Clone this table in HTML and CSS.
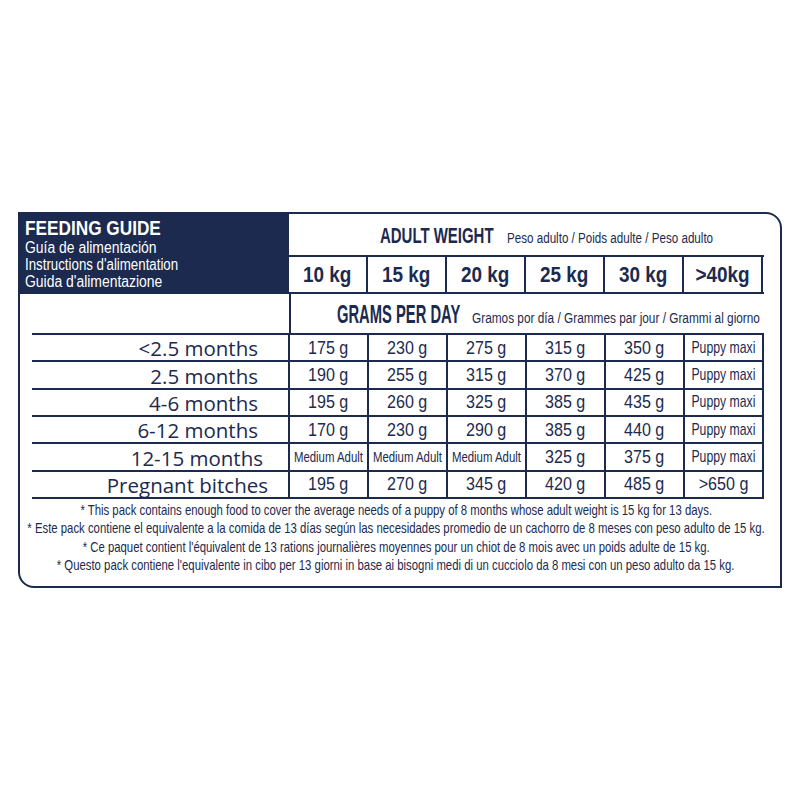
FILE: index.html
```html
<!DOCTYPE html>
<html>
<head>
<meta charset="utf-8">
<link rel="stylesheet" href="styles.css">
</head>
<body>
<div class="page">
  <div class="card">
    <div class="head">
      <div class="brand">
        <div class="brand-title"><span class="sx">FEEDING GUIDE</span></div>
        <div class="brand-sub"><span class="sx">Guía de alimentación</span></div>
        <div class="brand-sub narrow"><span class="sx">Instructions d'alimentation</span></div>
        <div class="brand-sub"><span class="sx">Guida d'alimentazione</span></div>
      </div>
      <div class="hright">
        <div class="aw">
          <div class="big-box aw-box"><span class="sx big aw-big">ADULT WEIGHT</span></div>
          <span class="sx small aw-small">Peso adulto / Poids adulte / Peso adulto</span>
        </div>
        <div class="kgrow">
          <div class="kg"><span class="sx">10 kg</span></div>
          <div class="kg"><span class="sx">15 kg</span></div>
          <div class="kg"><span class="sx">20 kg</span></div>
          <div class="kg"><span class="sx">25 kg</span></div>
          <div class="kg"><span class="sx">30 kg</span></div>
          <div class="kg"><span class="sx">&gt;40kg</span></div>
        </div>
      </div>
    </div>
    <div class="gramsrow">
      <div class="spacer"></div>
      <div class="grams">
        <div class="big-box gr-box"><span class="sx big gr-big">GRAMS PER DAY</span></div>
        <span class="sx small gr-small">Gramos por día / Grammes par jour / Grammi al giorno</span>
      </div>
    </div>
    <div class="rows">
      <div class="lbl">&lt;2.5 months</div>
      <div class="v"><span class="sx">175 g</span></div><div class="v"><span class="sx">230 g</span></div><div class="v"><span class="sx">275 g</span></div><div class="v"><span class="sx">315 g</span></div><div class="v"><span class="sx">350 g</span></div><div class="v pm"><span class="sx">Puppy maxi</span></div>

      <div class="lbl">2.5 months</div>
      <div class="v"><span class="sx">190 g</span></div><div class="v"><span class="sx">255 g</span></div><div class="v"><span class="sx">315 g</span></div><div class="v"><span class="sx">370 g</span></div><div class="v"><span class="sx">425 g</span></div><div class="v pm"><span class="sx">Puppy maxi</span></div>

      <div class="lbl">4-6 months</div>
      <div class="v"><span class="sx">195 g</span></div><div class="v"><span class="sx">260 g</span></div><div class="v"><span class="sx">325 g</span></div><div class="v"><span class="sx">385 g</span></div><div class="v"><span class="sx">435 g</span></div><div class="v pm"><span class="sx">Puppy maxi</span></div>

      <div class="lbl">6-12 months</div>
      <div class="v"><span class="sx">170 g</span></div><div class="v"><span class="sx">230 g</span></div><div class="v"><span class="sx">290 g</span></div><div class="v"><span class="sx">385 g</span></div><div class="v"><span class="sx">440 g</span></div><div class="v pm"><span class="sx">Puppy maxi</span></div>

      <div class="lbl l-wide">12-15 months</div>
      <div class="v ma"><span class="sx">Medium Adult</span></div><div class="v ma"><span class="sx">Medium Adult</span></div><div class="v ma"><span class="sx">Medium Adult</span></div><div class="v"><span class="sx">325 g</span></div><div class="v"><span class="sx">375 g</span></div><div class="v pm"><span class="sx">Puppy maxi</span></div>

      <div class="lbl l-preg">Pregnant bitches</div>
      <div class="v"><span class="sx">195 g</span></div><div class="v"><span class="sx">270 g</span></div><div class="v"><span class="sx">345 g</span></div><div class="v"><span class="sx">420 g</span></div><div class="v"><span class="sx">485 g</span></div><div class="v"><span class="sx">&gt;650 g</span></div>
    </div>
    <div class="notes">
      <div class="note"><span class="sx">* This pack contains enough food to cover the average needs of a puppy of 8 months whose adult weight is 15 kg for 13 days.</span></div>
      <div class="note"><span class="sx">* Este pack contiene el equivalente a la comida de 13 días según las necesidades promedio de un cachorro de 8 meses con peso adulto de 15 kg.</span></div>
      <div class="note"><span class="sx">* Ce paquet contient l'équivalent de 13 rations journalières moyennes pour un chiot de 8 mois avec un poids adulte de 15 kg.</span></div>
      <div class="note"><span class="sx">* Questo pack contiene l'equivalente in cibo per 13 giorni in base ai bisogni medi di un cucciolo da 8 mesi con un peso adulto da 15 kg.</span></div>
    </div>
  </div>
</div>
</body>
</html>
```
FILE: styles.css
```css
* { box-sizing: border-box; }
html, body { margin: 0; padding: 0; background: #ffffff; }
body {
  font-family: "Liberation Sans", Arial, sans-serif;
  color: #1b2a4e;
}
.sx {
  display: inline-block;
  white-space: nowrap;
  transform: scaleX(var(--s, 0.85));
  transform-origin: center center;
}
.page {
  width: 800px;
  height: 800px;
  padding: 212px 0 0 18px;
  overflow: hidden;
}
.card {
  width: 764px;
  height: 376px;
  border: 2px solid #1b2a4e;
  border-radius: 0 16px 0 16px;
  display: flex;
  flex-direction: column;
}
.head {
  display: flex;
  height: 80px;
}
.brand {
  width: 269px;
  flex-shrink: 0;
  background: #1b2a4e;
  color: #ffffff;
  padding: 3px 0 0 5px;
  overflow: hidden;
}
.brand .sx { transform-origin: left center; }
.brand-title {
  font-weight: bold;
  font-size: 21px;
  line-height: 22px;
  --s: 0.82;
}
.brand-sub {
  font-size: 16px;
  line-height: 17px;
  --s: 0.87;
}
.brand-sub.narrow { --s: 0.83; }
.hright {
  flex: 1;
  display: flex;
  flex-direction: column;
}
.aw {
  height: 41px;
  display: flex;
  align-items: baseline;
  padding: 9px 0 0 91px;
  overflow: hidden;
  white-space: nowrap;
}
.big-box { flex-shrink: 0; }
.aw-box { width: 127px; }
.big { font-weight: bold; transform-origin: left center; }
.small { transform-origin: left center; }
.aw-big { font-size: 22px; --s: 0.68; }
.aw-small { font-size: 14px; --s: 0.83; }
.kgrow {
  display: grid;
  grid-template-columns: repeat(6, 79px);
  width: 475px;
  height: 39px;
  border-top: 2px solid #1b2a4e;
  border-bottom: 2px solid #1b2a4e;
}
.kg {
  border-right: 2px solid #1b2a4e;
  display: flex;
  align-items: center;
  justify-content: center;
  font-weight: bold;
  font-size: 22px;
  --s: 0.86;
}
.gramsrow {
  display: flex;
  height: 39px;
}
.spacer { width: 269px; flex-shrink: 0; }
.grams {
  flex: 1;
  border-left: 2px solid #1b2a4e;
  display: flex;
  align-items: baseline;
  padding: 6px 0 0 46px;
  overflow: hidden;
  white-space: nowrap;
}
.gr-box { width: 135px; }
.gr-big { font-size: 25px; --s: 0.59; }
.gr-small { font-size: 14px; --s: 0.845; }
.rows {
  margin-left: 12px;
  width: 732px;
  display: grid;
  grid-template-columns: 258px repeat(6, 79px);
  grid-auto-rows: 27.33px;
  border-top: 2px solid #1b2a4e;
}
.lbl {
  font-family: "Open Sans", "Noto Sans", sans-serif;
  font-size: 20.5px;
  border-right: 2px solid #1b2a4e;
  border-bottom: 2px solid #1b2a4e;
  display: flex;
  align-items: center;
  justify-content: flex-end;
  padding: 2px 30px 0 0;
  line-height: 1;
  white-space: nowrap;
}
.lbl.l-wide { padding-right: 25px; }
.lbl.l-preg { padding-right: 20px; }
.v {
  border-right: 2px solid #1b2a4e;
  border-bottom: 2px solid #1b2a4e;
  display: flex;
  align-items: center;
  justify-content: center;
  font-size: 18.5px;
  white-space: nowrap;
  overflow: hidden;
  --s: 0.87;
}
.v.ma { font-size: 15px; --s: 0.76; }
.v.pm { font-size: 17px; --s: 0.72; }
.notes {
  flex: 1;
  padding-top: 2px;
  overflow: hidden;
  font-size: 15px;
  line-height: 18.3px;
  --s: 0.757;
}
.note {
  display: flex;
  justify-content: center;
  white-space: nowrap;
  padding-right: 8px;
}
```
